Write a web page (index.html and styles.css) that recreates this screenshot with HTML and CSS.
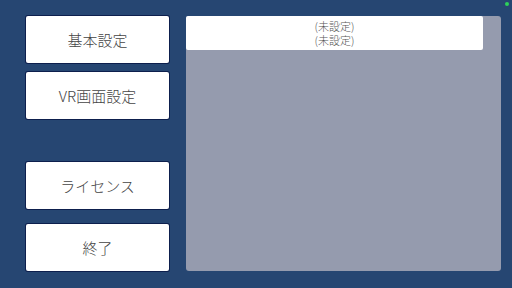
FILE: index.html
```html
<!DOCTYPE html>
<html lang="ja">
<head>
  <meta charset="UTF-8" />
  <title>Menu</title>
  <link rel="stylesheet" href="styles.css">
</head>
<body>
  <div id="screen">
    <div class="menu">
      <button class="menu-button">基本設定</button>
      <button class="menu-button">VR画面設定</button>
      <button class="menu-button license">ライセンス</button>
      <button class="menu-button quit">終了</button>
    </div>
    <div class="panel">
      <div class="panel-head">
        <p>(未設定)</p>
        <p>(未設定)</p>
      </div>
    </div>
    <span class="status-dot"></span>
  </div>
</body>
</html>
```

FILE: styles.css
```css
* {
  margin: 0;
  padding: 0;
  box-sizing: border-box;
}

body {
  background-color: #264672;
  font-family: 'Noto Sans CJK JP', 'Noto Sans', sans-serif;
}

#screen {
  position: relative;
  width: 512px;
  height: 288px;
  display: flex;
  padding: 16px 0 0 26px;
  gap: 17px;
}

.menu {
  display: flex;
  flex-direction: column;
  width: 143px;
}

.menu-button {
  height: 47px;
  background-color: #ffffff;
  border: none;
  border-radius: 2px;
  box-shadow: 0 0 0 1px #0d1f4d;
  color: #444444;
  font-family: inherit;
  font-size: 15px;
  font-weight: 300;
  margin-bottom: 9px;
}

.menu-button.license {
  margin-top: 34px;
  margin-bottom: 15px;
}

.panel {
  width: 315px;
  height: 255px;
  background-color: #959bae;
  border-radius: 3px;
}

.panel-head {
  width: 297px;
  height: 34px;
  background-color: #ffffff;
  border-radius: 2px;
  display: flex;
  flex-direction: column;
  justify-content: center;
  align-items: center;
  color: #555555;
  font-size: 11px;
  font-weight: 300;
  line-height: 14px;
}

.status-dot {
  position: absolute;
  top: 2px;
  right: 3px;
  width: 4px;
  height: 4px;
  border-radius: 50%;
  background-color: #2ed15a;
}
```
